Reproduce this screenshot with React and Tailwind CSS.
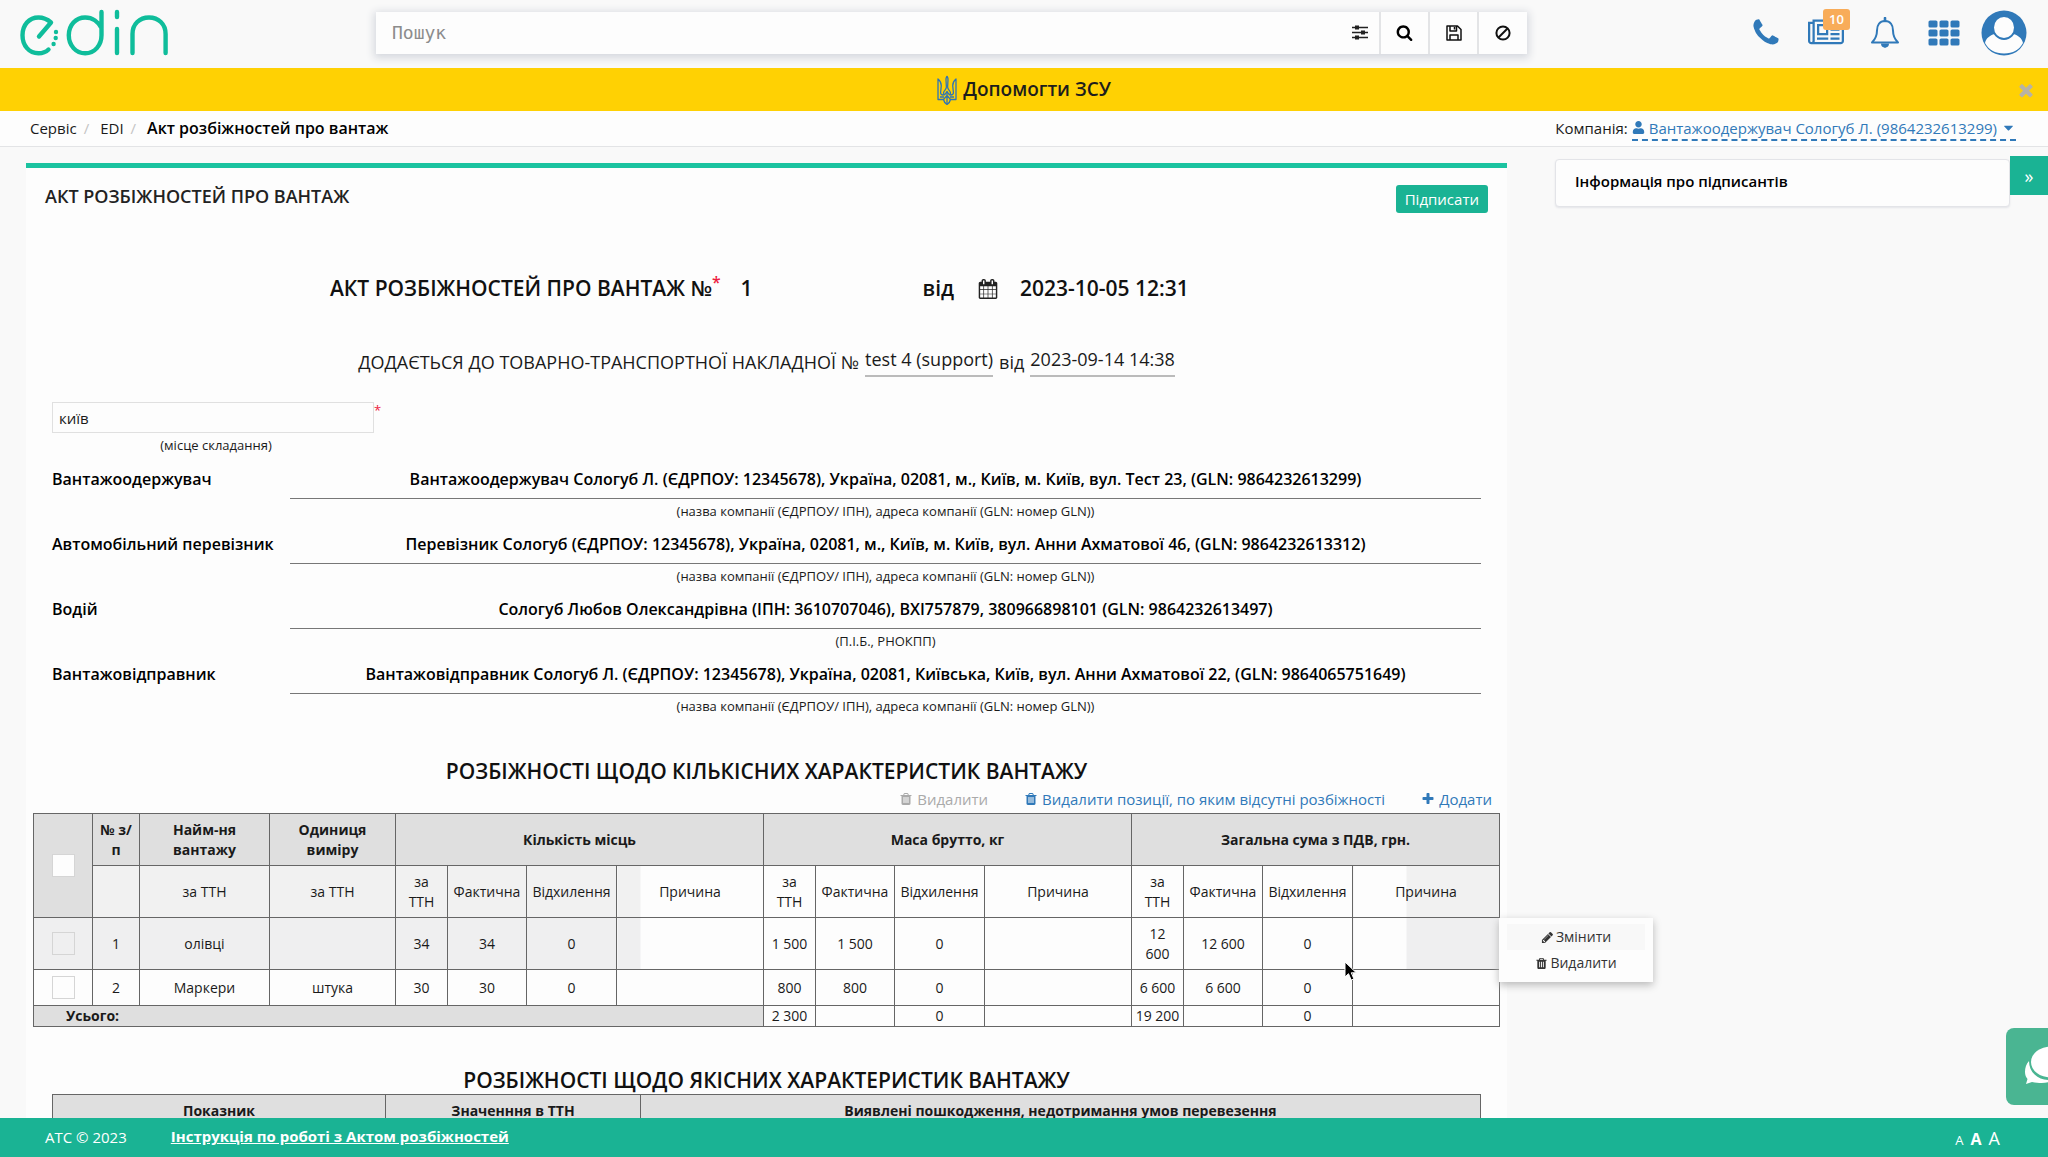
import { useState } from 'react';
import { FaUser, FaCaretDown } from 'react-icons/fa';

const PATHS = {
  phone: 'M1600 1240q0 27-10 70.5t-21 68.5q-21 50-122 106-94 51-186 51-27 0-53-3.5t-57.5-12.5-47-14.5-55.5-20.5-49-18q-98-35-175-83-127-79-264-216t-216-264q-48-77-83-175-3-9-18-49t-20.5-55.5-14.5-47-12.5-57.5-3.5-53q0-92 51-186 56-101 106-122 25-11 68.5-21t70.5-10q14 0 21 3 18 6 53 76 11 19 30 54t35 63.5 31 53.5q3 4 17.5 25t21.5 35.5 7 28.5q0 20-28.5 50t-62 55-62 53-28.5 46q0 9 5 22.5t8.5 20.5 14 24 11.5 19q76 137 174 235t235 174q2 1 19 11.5t24 14 20.5 8.5 22.5 5q18 0 46-28.5t53-62 55-62 50-28.5q14 0 28.5 7t35.5 21.5 25 17.5q25 15 53.5 31t63.5 35 54 30q70 35 76 53 3 7 3 21z',
  trash: 'M704 1376v-704q0-14-9-23t-23-9h-64q-14 0-23 9t-9 23v704q0 14 9 23t23 9h64q14 0 23-9t9-23zm256 0v-704q0-14-9-23t-23-9h-64q-14 0-23 9t-9 23v704q0 14 9 23t23 9h64q14 0 23-9t9-23zm256 0v-704q0-14-9-23t-23-9h-64q-14 0-23 9t-9 23v704q0 14 9 23t23 9h64q14 0 23-9t9-23zm-544-992h448l-48-117q-7-9-17-11h-317q-10 2-17 11zm928 32v64q0 14-9 23t-23 9h-96v948q0 83-47 143.5t-113 60.5h-832q-66 0-113-58.5t-47-141.5v-952h-96q-14 0-23-9t-9-23v-64q0-14 9-23t23-9h309l70-167q15-37 54-63t79-26h320q40 0 79 26t54 63l70 167h309q14 0 23 9t9 23z',
  calendar: 'M192 1664h288v-288h-288v288zm352 0h320v-288h-320v288zm-352-352h288v-320h-288v320zm352 0h320v-320h-320v320zm-352-384h288v-288h-288v288zm736 736h320v-288h-320v288zm-384-736h320v-288h-320v288zm768 736h288v-288h-288v288zm-384-352h320v-320h-320v320zm-352-864v-288q0-13-9.5-22.5t-22.5-9.5h-64q-13 0-22.5 9.5t-9.5 22.5v288q0 13 9.5 22.5t22.5 9.5h64q13 0 22.5-9.5t9.5-22.5zm736 864h288v-320h-288v320zm-384-384h320v-288h-320v288zm384 0h288v-288h-288v288zm32-480v-288q0-13-9.5-22.5t-22.5-9.5h-64q-13 0-22.5 9.5t-9.5 22.5v288q0 13 9.5 22.5t22.5 9.5h64q13 0 22.5-9.5t9.5-22.5zm384-64v1280q0 52-38 90t-90 38h-1408q-52 0-90-38t-38-90v-1280q0-52 38-90t90-38h128v-96q0-66 47-113t113-47h64q66 0 113 47t47 113v96h384v-96q0-66 47-113t113-47h64q66 0 113 47t47 113v96h128q52 0 90 38t38 90z',
  search: 'M1216 832q0-185-131.5-316.5t-316.5-131.5-316.5 131.5-131.5 316.5 131.5 316.5 316.5 131.5 316.5-131.5 131.5-316.5zm512 832q0 52-38 90t-90 38q-54 0-90-38l-343-342q-179 124-399 124-143 0-273.5-55.5t-225-150-150-225-55.5-273.5 55.5-273.5 150-225 225-150 273.5-55.5 273.5 55.5 225 150 150 225 55.5 273.5q0 220-124 399l343 343q37 37 37 90z',
  pencil: 'M491 1536l91-91-235-235-91 91v107h128v128h107zm523-928q0-22-22-22-10 0-17 7l-542 542q-7 7-7 17 0 22 22 22 10 0 17-7l542-542q7-7 7-17zm-54-192l416 416-832 832h-416v-416zm683 96q0 53-37 90l-166 166-416-416 166-165q36-38 90-38 53 0 91 38l235 234q37 39 37 91z',
  times: 'M1490 1322q0 40-28 68l-136 136q-28 28-68 28t-68-28l-294-294-294 294q-28 28-68 28t-68-28l-136-136q-28-28-28-68t28-68l294-294-294-294q-28-28-28-68t28-68l136-136q28-28 68-28t68 28l294 294 294-294q28-28 68-28t68 28l136 136q28 28 28 68t-28 68l-294 294 294 294q28 28 28 68z',
  plus: 'M1600 736v192q0 40-28 68t-68 28h-416v416q0 40-28 68t-68 28h-192q-40 0-68-28t-28-68v-416h-416q-40 0-68-28t-28-68v-192q0-40 28-68t68-28h416v-416q0-40 28-68t68-28h192q40 0 68 28t28 68v416h416q40 0 68 28t28 68z',
};

function Icon({ name, size = 16, className = '' }) {
  return (
    <svg width={size} height={size} viewBox="0 0 1792 1792" fill="currentColor" className={className} aria-hidden="true">
      <path d={PATHS[name]} />
    </svg>
  );
}

function Logo() {
  return (
    <svg width="150" height="48" viewBox="19 10 150 48" fill="none" stroke="#0fbd9b" strokeWidth="4.4" strokeLinecap="round" aria-label="edin">
      <path d="M39 37.5 51 23.5C47 20 43 18.5 38.5 18.5 29 18.5 22.5 26 22.5 36.3S29 54.3 38.5 54.3C42.5 54.3 46 53 48.5 50.5" strokeLinejoin="round" />
      <path d="M101.5 13V36.3C101.5 46.5 94.5 54.3 85.2 54.3S68.8 46.5 68.8 36.3 75.8 18.5 85.2 18.5C92.5 18.5 98.5 23 101.5 29" />
      <path d="M117 13v5M117 30v24" />
      <path d="M132.5 54V35c0-10 7-16.5 16.5-16.5S165.600 25 165.600 35v19" />
      <path d="M56 33v.1M55.7 39v.1M53.6 45v.1" />
    </svg>
  );
}

function Trident() {
  return (
    <svg width="20" height="30" viewBox="0 0 20 30" fill="none" stroke="#2f74b5" strokeWidth="1.3" strokeLinejoin="round" aria-hidden="true">
      <path d="M10 1c-.8 1.2-1.100 2.500-1 4l.4 7c0 2-1.400 3-2.400 4.500-.8 1.200-.6 3 1 3.500M10 1c.8 1.200 1.100 2.500 1 4l-.4 7c0 2 1.400 3 2.400 4.500.8 1.200.6 3-1 3.500" />
      <path d="M1 4v20.500h5.500C7 27 8.500 28.500 10 29.500c1.500-1 3-2.500 3.500-5H19V4c-2.500 2-3.500 4.500-3.200 7.500l.6 6c.1 1.500-1 2.500-2.400 2.500-1.500 0-3-1.500-4-3.500-1 2-2.500 3.500-4 3.500s-2.500-1-2.400-2.500l.6-6C4.500 8.500 3.500 6 1 4z" />
      <path d="M10 16.500v12.500M6.500 24.500 10 20.500l3.500 4M3 22h4M13 22h4" />
    </svg>
  );
}

function Header() {
  return (
    <header className="flex h-[68px] shrink-0 items-center bg-[#f9f9f9] pb-[3px] pl-[19px]">
      <a href="#home"><Logo /></a>
      <form className="ml-[207px] flex h-[42px] w-[1151px] items-stretch divide-x-2 divide-[#e3e4e6] bg-[#fdfdfd] shadow-[0_2px_8px_2px_#d5d8de]">
        <div className="flex flex-1 items-center pr-[10px] pl-4">
          <input aria-label="Пошук" placeholder="Пошук" className="flex-1 bg-transparent font-['DejaVu_Sans_Mono',monospace] text-lg outline-none placeholder:text-[#8c8c8c]" />
          <button type="button" aria-label="Фільтри">
            <svg width="18" height="18" viewBox="0 0 18 18" stroke="#222" strokeWidth="1.5">
              <path d="M1 3.500h16M1 8.500h16M1 13.500h16" />
              <path d="M6 1.500v4M12 6.500v4M6 11.500v4" strokeWidth="4" />
            </svg>
          </button>
        </div>
        <button type="button" aria-label="Знайти" className="flex w-[49px] items-center justify-center text-black"><Icon name="search" size={17} /></button>
        <button type="button" aria-label="Зберегти" className="flex w-[49px] items-center justify-center">
          <svg width="18" height="18" viewBox="0 0 18 18" fill="none" stroke="#111" strokeWidth="1.5" strokeLinejoin="round">
            <path d="M2 2h10.500L16 5.500V16H2zM5 16v-5h8v5M5 2v5h6.500V2M9.500 3v2.500" />
          </svg>
        </button>
        <button type="button" aria-label="Скинути" className="flex w-[48px] items-center justify-center">
          <svg width="18" height="18" viewBox="0 0 18 18" fill="none" stroke="#111" strokeWidth="2">
            <circle cx="9" cy="9" r="6.6" />
            <path d="M4.500 13.500 13.500 4.500" />
          </svg>
        </button>
      </form>
      <nav className="ml-auto flex items-center pr-[21px] text-[#3079b9]">
        <button aria-label="Телефон"><Icon name="phone" size={32} /></button>
        <button aria-label="Новини" className="relative ml-[26px]">
          <svg width="36" height="32" viewBox="0 0 2048 1792" fill="currentColor">
            <path d="M1024 512h-384v384h384v-384zm128 640v128h-640v-128h640zm0-768v640h-640v-640h640zm640 768v128h-512v-128h512zm0-256v128h-512v-128h512zm0-256v128h-512v-128h512zm0-256v128h-512v-128h512zm-1536 960v-960h-128v960q0 26 19 45t45 19 45-19 19-45zm1664 0v-1088h-1536v1088q0 33-11 64h1483q26 0 45-19t19-45zm128-1216v1216q0 80-56 136t-136 56h-1664q-80 0-136-56t-56-136v-1088h256v-128h1792z" />
          </svg>
          <span className="absolute -top-2 left-[15px] rounded-[3px] bg-[#f8ac59] px-[6px] text-[13px] leading-[21px] font-semibold text-white">10</span>
        </button>
        <button aria-label="Сповіщення" className="ml-[26px]">
          <svg width="30" height="32" viewBox="0 0 30 32" fill="none" stroke="currentColor" strokeWidth="2">
            <path d="M15 4C9.500 4 7 8.500 7 13.500 7 19 5 22.500 2 25.500h26c-3-3-5-6.500-5-12C23 8.500 20.500 4 15 4z" strokeLinejoin="round" />
            <path d="M15 1v3" strokeWidth="2.6" strokeLinecap="round" />
            <path d="M11 26.500a4 4 0 0 0 8 0z" fill="currentColor" stroke="none" />
            <path d="M15 30.500v.5" />
          </svg>
        </button>
        <button aria-label="Сервіси" className="ml-7">
          <svg width="32" height="26" viewBox="0 0 32 26" fill="currentColor">
            {[0, 11, 22].map(x => [0, 9, 18].map(y => (
              <rect key={`${x}-${y}`} x={x + 0.5} y={y + 0.5} width="9" height="7" rx="1.6" />
            )))}
          </svg>
        </button>
        <button aria-label="Профіль" className="ml-[21px]">
          <svg width="46" height="46" viewBox="0 0 46 46">
            <circle cx="23" cy="23" r="22.5" fill="currentColor" />
            <path d="M4 33c1-5 5-7.500 9.500-9C17 27.500 29 27.500 32.500 24c4.500 1.500 8.500 4 9.500 9-3.500 6.500-10 10.500-19 10.500S7.500 39.500 4 33z" fill="#fdfdfd" />
            <ellipse cx="23" cy="17.5" rx="11" ry="11.5" fill="#fdfdfd" stroke="currentColor" strokeWidth="2" />
          </svg>
        </button>
      </nav>
    </header>
  );
}

function Banner() {
  const [open, setOpen] = useState(true);
  if (!open) return null;
  return (
    <div className="relative flex h-[43px] shrink-0 items-center justify-center gap-[6px] bg-[#ffd103]">
      <Trident />
      <a href="#help" className="text-[19px] font-semibold text-[#1d1d1d]">Допомогти ЗСУ</a>
      <button aria-label="Закрити" onClick={() => setOpen(false)} className="absolute right-3 text-[#b9b3a4]"><Icon name="times" size={20} /></button>
    </div>
  );
}

function Breadcrumbs() {
  return (
    <div className="flex h-9 shrink-0 items-center border-b border-[#e3e4e6] bg-[#fdfdfd] pr-8 pl-[30px]">
      <nav className="flex">
        <a href="#service">Сервіс</a>
        <span className="px-[7px] text-[#c4c4c4]">/</span>
        <a href="#edi" className="ml-1">EDI</a>
        <span className="px-[7px] text-[#c4c4c4]">/</span>
        <span className="ml-1 text-base leading-[22px] font-semibold text-black">Акт розбіжностей про вантаж</span>
      </nav>
      <div className="ml-auto flex items-center gap-1">
        <span>Компанія:</span>
        <button className="flex items-center gap-1 border-b-2 border-dashed border-[#3079b9] leading-[22px] text-[#3079b9]">
          <FaUser size={13} />
          Вантажоодержувач Сологуб Л. (9864232613299)
          <FaCaretDown size={15} />
        </button>
      </div>
    </div>
  );
}

const PARTY_HINT = '(назва компанії (ЄДРПОУ/ ІПН), адреса компанії (GLN: номер GLN))';

const PARTIES = [
  { label: 'Вантажоодержувач', value: 'Вантажоодержувач Сологуб Л. (ЄДРПОУ: 12345678), Україна, 02081, м., Київ, м. Київ, вул. Тест 23, (GLN: 9864232613299)', hint: PARTY_HINT },
  { label: 'Автомобільний перевізник', value: 'Перевізник Сологуб (ЄДРПОУ: 12345678), Україна, 02081, м., Київ, м. Київ, вул. Анни Ахматової 46, (GLN: 9864232613312)', hint: PARTY_HINT },
  { label: 'Водій', value: 'Сологуб Любов Олександрівна (ІПН: 3610707046), BXI757879, 380966898101 (GLN: 9864232613497)', hint: '(П.І.Б., РНОКПП)' },
  { label: 'Вантажовідправник', value: 'Вантажовідправник Сологуб Л. (ЄДРПОУ: 12345678), Україна, 02081, Київська, Київ, вул. Анни Ахматової 22, (GLN: 9864065751649)', hint: PARTY_HINT },
];

function Parties() {
  return (
    <dl className="px-[26px]">
      {PARTIES.map(p => (
        <div key={p.label} className="flex h-[65px]">
          <dt className="w-[238px] shrink-0 pt-2 text-base leading-5 font-semibold text-black">{p.label}</dt>
          <dd className="flex-1 text-center">
            <p className="border-b border-[#777] pt-2 pb-[9px] text-base leading-5 font-semibold text-black">{p.value}</p>
            <p className="text-[13px] leading-6">{p.hint}</p>
          </dd>
        </div>
      ))}
    </dl>
  );
}

const CELL = 'border border-[#666] p-0';
const SUB_HEADS = ['за ТТН', 'Фактична', 'Відхилення', 'Причина'];

function Check({ label }) {
  return <input type="checkbox" aria-label={label} className="mx-auto block size-[23px] appearance-none border border-[#d5d5d5] bg-[#fdfdfd]" />;
}

function RowMenu() {
  return (
    <div className="absolute top-0 left-full z-10 w-[154px] bg-[#fdfdfd] px-2 py-1.5 text-[#333] shadow-[0_3px_8px_#b8b8b8]">
      <button className="flex h-[26px] w-full items-center justify-center gap-0.5 bg-[#f8f8f8]"><Icon name="pencil" size={13} />Змінити</button>
      <button className="flex h-[26px] w-full items-center justify-center gap-0.5"><Icon name="trash" size={13} />Видалити</button>
    </div>
  );
}

function Pointer() {
  return (
    <svg width="14" height="21" viewBox="0 0 14 21" className="pointer-events-none absolute top-[43px] left-[81px] z-20" aria-hidden="true">
      <path d="M1 1v15l3.500-3.300 2.700 6.400 2.700-1.200-2.600-6.100h5z" fill="#000" stroke="#fff" strokeWidth="1" />
    </svg>
  );
}

function QuantityTable() {
  return (
    <table className="w-full table-fixed border-collapse border border-[#666] bg-[#fdfdfd] text-center text-sm leading-5">
      <colgroup>
        <col className="w-[59px]" />
        <col className="w-[47px]" />
        <col className="w-[130px]" />
        <col className="w-[126px]" />
        <col className="w-[52px]" />
        <col className="w-[79px]" />
        <col className="w-[90px]" />
        <col className="w-[147px]" />
        <col className="w-[52px]" />
        <col className="w-[79px]" />
        <col className="w-[90px]" />
        <col className="w-[147px]" />
        <col className="w-[52px]" />
        <col className="w-[79px]" />
        <col className="w-[90px]" />
        <col className="w-[147px]" />
      </colgroup>
      <thead>
        <tr className="h-[52px] bg-[#dfdfdf]">
          <th rowSpan={2} className={CELL}><Check label="Вибрати всі" /></th>
          <th className={CELL}>№ з/<br />п</th>
          <th className={CELL}>Найм-ня<br />вантажу</th>
          <th className={CELL}>Одиниця<br />виміру</th>
          <th colSpan={4} className={CELL}>Кількість місць</th>
          <th colSpan={4} className={CELL}>Маса брутто, кг</th>
          <th colSpan={4} className={CELL}>Загальна сума з ПДВ, грн.</th>
        </tr>
        <tr className="h-[52px]">
          <td className={`${CELL} bg-[#f1f1f1]`} />
          <td className={`${CELL} bg-[#f1f1f1]`}>за ТТН</td>
          <td className={`${CELL} bg-[#f1f1f1]`}>за ТТН</td>
          {[0, 1, 2].map(group => SUB_HEADS.map((head, i) => (
            <td key={`${group}-${head}`} className={`${CELL} ${group === 0 && i < 3 ? 'bg-[#f1f1f1]' : ''} ${group === 0 && i === 3 ? 'bg-linear-to-r from-[#f1f1f1] from-16% to-[#fdfdfd] to-16%' : ''} ${group === 2 && i === 3 ? 'bg-linear-to-r from-[#fdfdfd] from-36% to-[#f1f1f1] to-36%' : ''}`}>
              {i === 0 ? <>за<br />ТТН</> : head}
            </td>
          )))}
        </tr>
      </thead>
      <tbody>
        <tr className="h-[52px]">
          <td className={`${CELL} bg-[#efeff0]`}>
            <input type="checkbox" aria-label="Позиція 1" className="mx-auto block size-[23px] appearance-none border border-[#d5d5d5] bg-[#efeff0]" />
          </td>
          {['1', 'олівці', '', '34', '34', '0'].map((v, i) => (
            <td key={i} className={`${CELL} bg-[#efeff0]`}>{v}</td>
          ))}
          <td className={`${CELL} bg-linear-to-r from-[#efeff0] from-16% to-[#fdfdfd] to-16%`} />
          <td className={CELL}>1 500</td>
          <td className={CELL}>1 500</td>
          <td className={CELL}>0</td>
          <td className={CELL} />
          <td className={CELL}>12<br />600</td>
          <td className={CELL}>12 600</td>
          <td className={`${CELL} relative`}>0<Pointer /></td>
          <td className={`${CELL} relative bg-linear-to-r from-[#fdfdfd] from-36% to-[#efeff0] to-36%`}><RowMenu /></td>
        </tr>
        <tr className="h-9">
          {[<Check key="c" label="Позиція 2" />, '2', 'Маркери', 'штука', '30', '30', '0', '', '800', '800', '0', '', '6 600', '6 600', '0', ''].map((v, i) => (
            <td key={i} className={CELL}>{v}</td>
          ))}
        </tr>
      </tbody>
      <tfoot>
        <tr className="h-[21px]">
          <th colSpan={8} className={`${CELL} bg-[#dfdfdf] pl-8 text-left`}>Усього:</th>
          {['2 300', '', '0', '', '19 200', '', '0', ''].map((v, i) => (
            <td key={i} className={CELL}>{v}</td>
          ))}
        </tr>
      </tfoot>
    </table>
  );
}

function Document() {
  return (
    <section className="min-w-0 flex-1 border-t-[5px] border-[#1bc3a0] bg-[#fdfdfd]">
      <div className="flex items-start justify-between px-[19px] pt-[17px]">
        <h1 className="text-lg leading-[22px] font-semibold text-[#222]">АКТ РОЗБІЖНОСТЕЙ ПРО ВАНТАЖ</h1>
        <button className="rounded-[3px] bg-[#1ab394] px-[9px] leading-7 text-white">Підписати</button>
      </div>

      <form>
        <div className="mt-[60px] flex h-8 items-center justify-center text-[21px] font-semibold text-[#111]">
          <label htmlFor="act-number">АКТ РОЗБІЖНОСТЕЙ ПРО ВАНТАЖ №<sup className="text-[#ed1c40]">*</sup></label>
          <input id="act-number" defaultValue="1" className="ml-2 w-[186px] bg-transparent px-3 outline-none" />
          <label htmlFor="act-date" className="ml-2">від</label>
          <button type="button" aria-label="Календар" className="ml-6"><Icon name="calendar" size={20} className="text-[#222]" /></button>
          <input id="act-date" defaultValue="2023-10-05 12:31" className="ml-[10px] w-[195px] bg-transparent px-3 outline-none" />
        </div>

        <p className="mt-10 flex h-8 items-center justify-center gap-[6px] text-lg">
          <span className="pt-0.5">ДОДАЄТЬСЯ ДО ТОВАРНО-ТРАНСПОРТНОЇ НАКЛАДНОЇ №</span>
          <span className="border-b-2 border-[#bbb] pb-0.5 leading-[28px]">test 4 (support)</span>
          <span className="pt-0.5">від</span>
          <span className="border-b-2 border-[#bbb] pb-0.5 leading-[28px]">2023-09-14 14:38</span>
        </p>

        <div className="mt-[25px] w-[354px] pl-[26px]">
          <div className="flex items-start">
            <input id="place" defaultValue="київ" className="h-[31px] min-w-0 flex-1 border border-[#e0e0e0] bg-[#fdfdfd] px-[6px] outline-none" />
            <span className="w-[6px] text-[13px] leading-4 text-[#ed1c40]">*</span>
          </div>
          <label htmlFor="place" className="block text-center text-[13px] leading-6">(місце складання)</label>
        </div>
      </form>

      <div className="mt-1"><Parties /></div>

      <div className="px-[7px]">
        <h2 className="mt-9 text-center text-[21px] leading-7 font-semibold text-[#111]">РОЗБІЖНОСТІ ЩОДО КІЛЬКІСНИХ ХАРАКТЕРИСТИК ВАНТАЖУ</h2>
        <div className="flex h-7 items-center justify-end gap-9 pr-2 text-[#3079b9]">
          <button disabled className="flex items-center gap-1 text-[#aaa]"><Icon name="trash" size={14} />Видалити</button>
          <button className="flex items-center gap-1"><Icon name="trash" size={14} />Видалити позиції, по яким відсутні розбіжності</button>
          <button className="flex items-center gap-1"><Icon name="plus" size={14} />Додати</button>
        </div>
        <QuantityTable />
      </div>

      <div className="px-[26px]">
        <h2 className="mt-[39px] text-center text-[21px] leading-7 font-semibold text-[#111]">РОЗБІЖНОСТІ ЩОДО ЯКІСНИХ ХАРАКТЕРИСТИК ВАНТАЖУ</h2>
        <table className="w-full table-fixed border-collapse bg-[#dfdfdf] text-sm leading-5">
          <thead>
            <tr className="h-8">
              <th className={`${CELL} w-[333px]`}>Показник</th>
              <th className={`${CELL} w-[255px]`}>Значенння в ТТН</th>
              <th className={CELL}>Виявлені пошкодження, недотримання умов перевезення</th>
            </tr>
          </thead>
        </table>
      </div>
    </section>
  );
}

function Sidebar() {
  return (
    <aside className="-mt-[7px] flex w-[493px] shrink-0 items-start">
      <div className="mt-[3px] flex-1 rounded border border-[#e3e4e8] bg-[#fdfdfd] px-[19px] pt-[10px] pb-[14px] leading-[22px] font-semibold text-black shadow-[0_1px_2px_#e3e4e8]">Інформація про підписантів</div>
      <button aria-label="Згорнути панель" className="h-[39px] w-[38px] bg-[#1ab394] text-lg leading-8 text-white">»</button>
    </aside>
  );
}

function Footer() {
  return (
    <footer className="z-10 flex h-[39px] shrink-0 items-center bg-[#1ab394] pr-12 pl-[45px] text-white">
      <span>ATC © 2023</span>
      <a href="#manual" className="ml-11 pb-0.5 font-bold underline">Інструкція по роботі з Актом розбіжностей</a>
      <div className="ml-auto flex items-baseline gap-[7px]">
        <button className="text-[13px]">A</button>
        <button className="text-base font-bold">A</button>
        <button className="text-lg">A</button>
      </div>
    </footer>
  );
}

function ChatButton() {
  return (
    <button aria-label="Чат" className="fixed right-0 bottom-[52px] z-20 h-[77px] w-[42px] overflow-hidden rounded-l-lg bg-[#4ab592]">
      <svg width="42" height="77" viewBox="0 0 42 77">
        <path d="M23 33c-3 3-4 7-4 11 0 3 1 5 2.500 7L20 56l6-2c10 2 17 1 20-2-12 1-23-6-23-19z" fill="#fff" />
        <ellipse cx="45" cy="34" rx="20" ry="15.5" fill="#fff" />
      </svg>
    </button>
  );
}

export default function App() {
  return (
    <div className="flex h-screen flex-col overflow-hidden bg-[#f9f9f9] font-['Open_Sans','Noto_Sans',sans-serif] text-[15px] text-[#1a1a1a]">
      <Header />
      <Banner />
      <Breadcrumbs />
      <main className="flex min-h-0 flex-1 items-start gap-12 overflow-hidden pt-4 pl-[26px]">
        <Document />
        <Sidebar />
      </main>
      <Footer />
      <ChatButton />
    </div>
  );
}
